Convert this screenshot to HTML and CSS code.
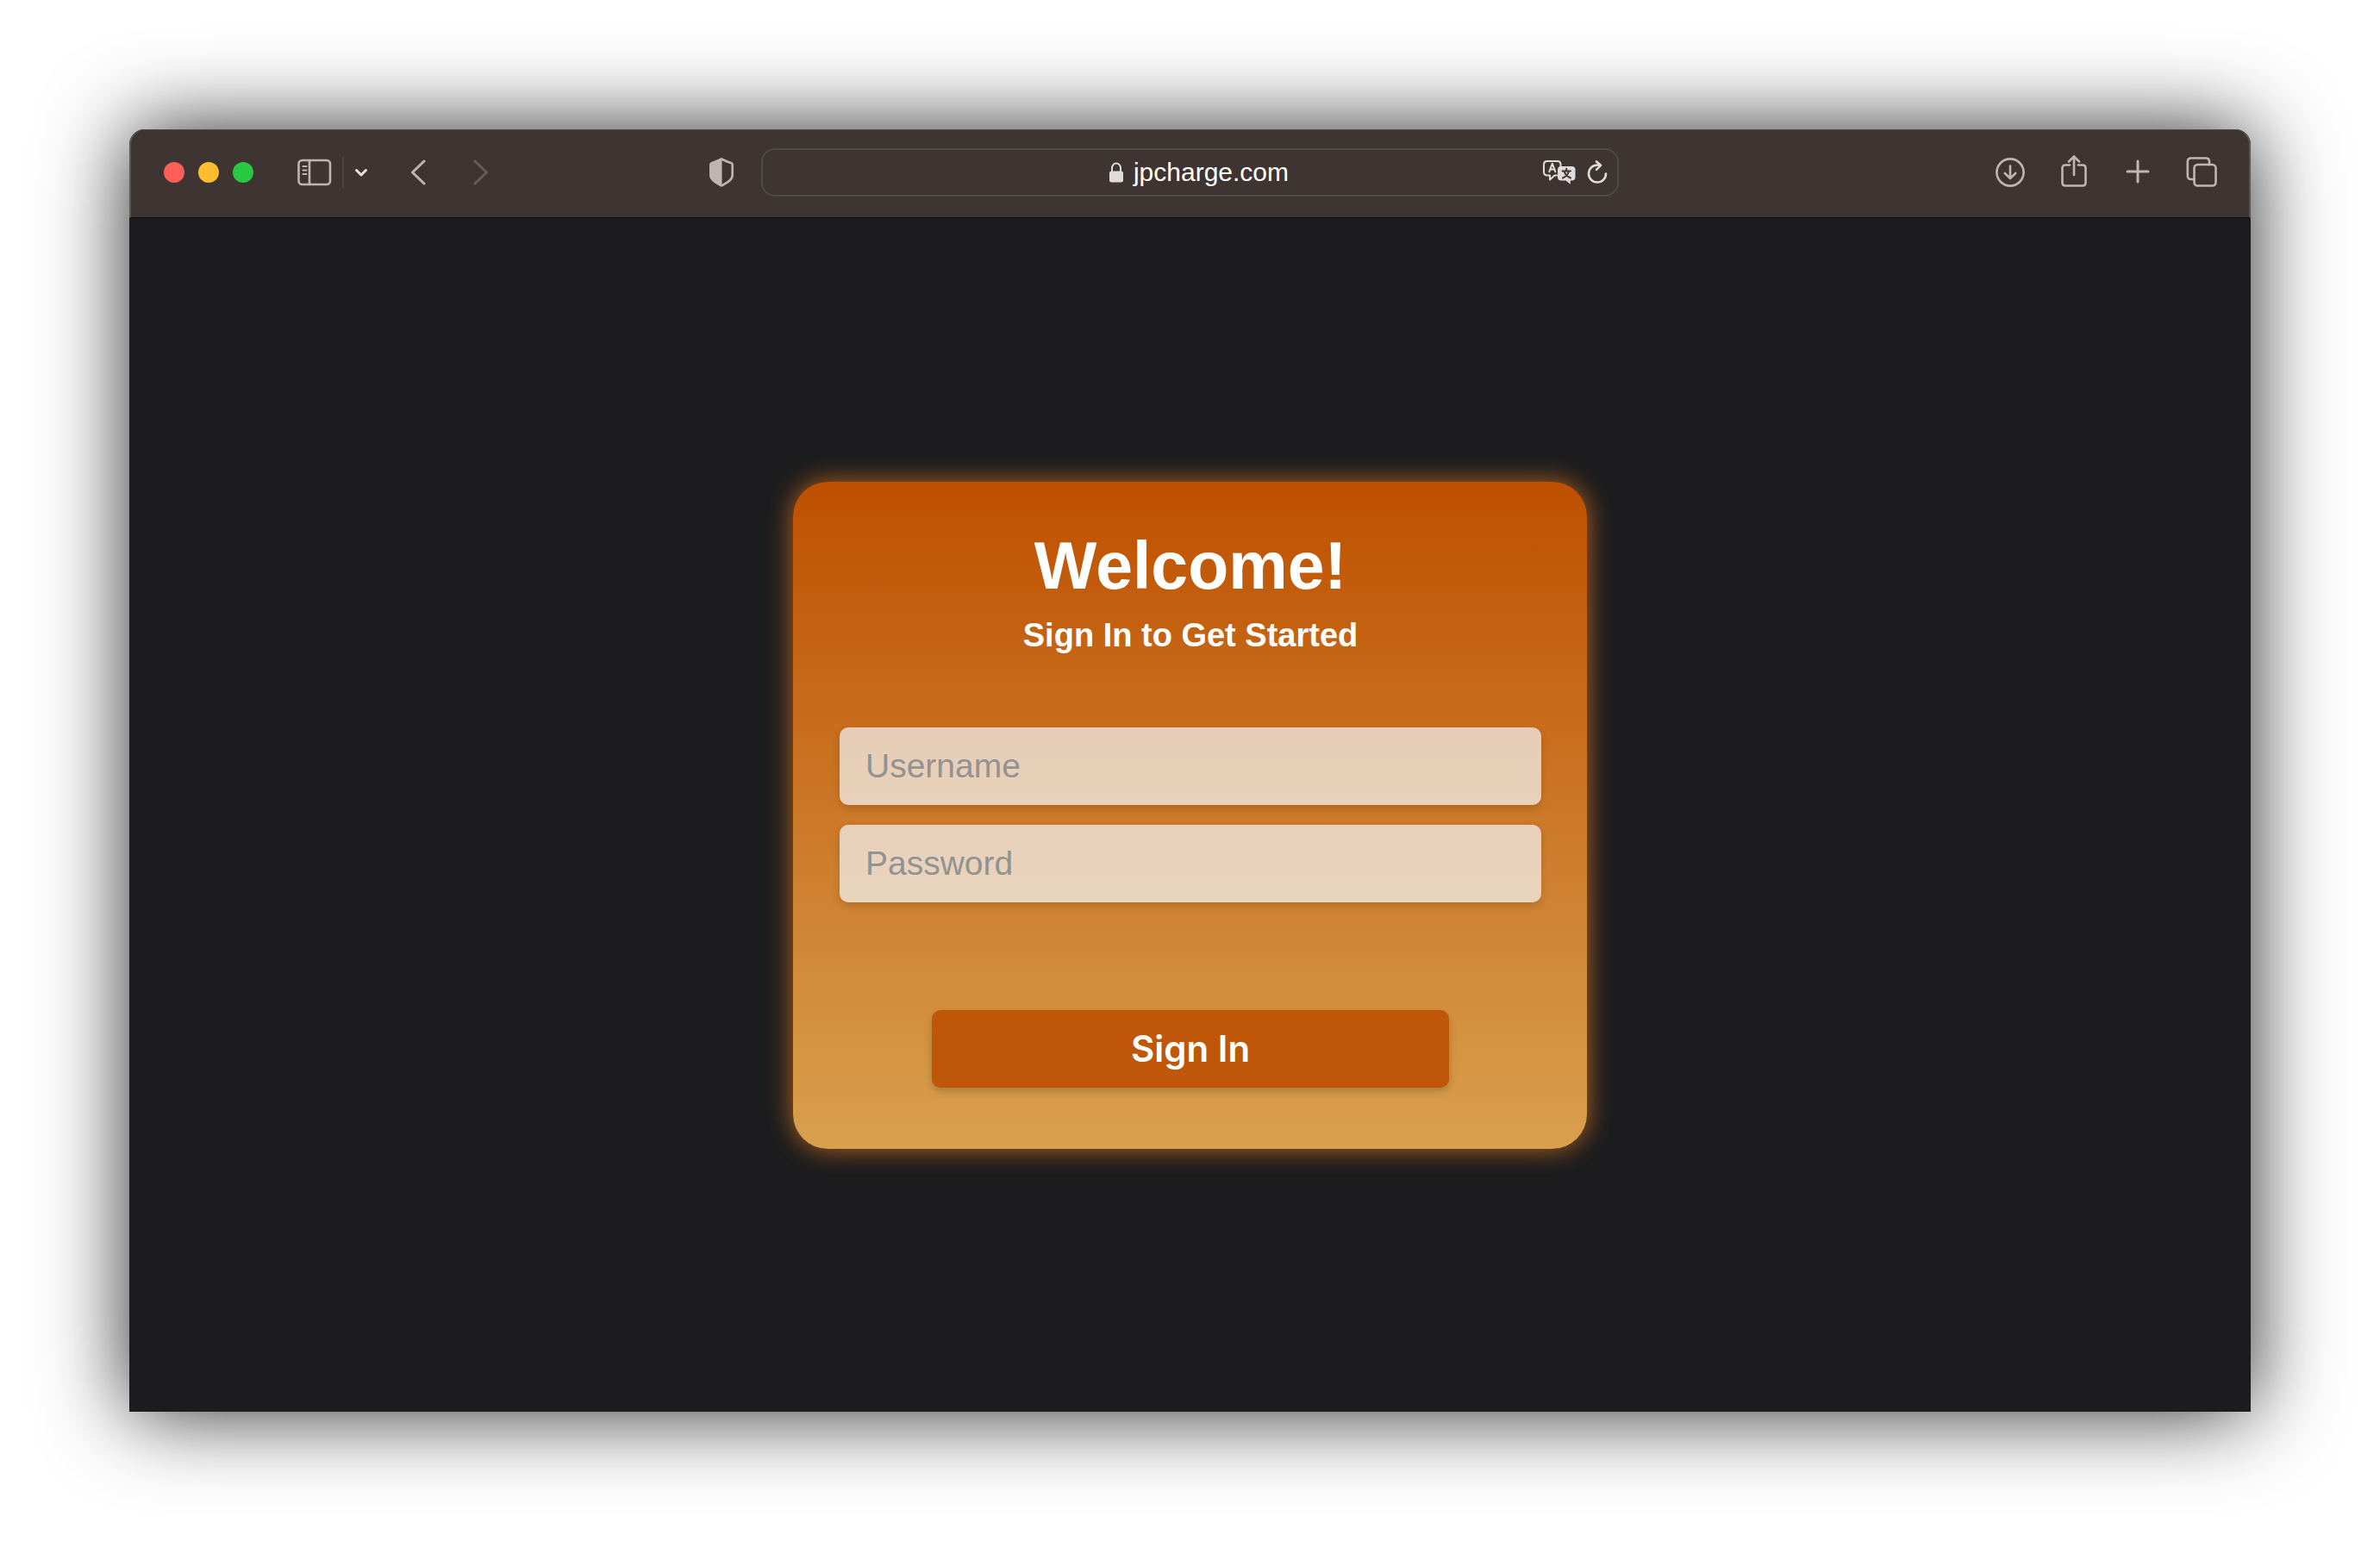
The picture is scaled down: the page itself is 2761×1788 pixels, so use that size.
FILE: index.html
```html
<!DOCTYPE html>
<html lang="en">
<head>
<meta charset="utf-8">
<title>Sign In</title>
<link rel="stylesheet" href="styles.css">
</head>
<body>
<div class="window">
  <header class="toolbar">
    <div class="group group-left">
      <div class="lights">
        <button class="light red" aria-label="Close"></button>
        <button class="light yellow" aria-label="Minimize"></button>
        <button class="light green" aria-label="Zoom"></button>
      </div>
      <div class="sidebar-tools">
        <button class="icon" aria-label="Show sidebar">
          <svg width="40" height="32" viewBox="0 0 40 32"><rect x="1.5" y="2" width="36.5" height="28" rx="4"/><path d="M14 2v28"/><path class="thin" d="M6.500 9h4M6.500 13.500h4M6.500 18h4"/></svg>
        </button>
        <span class="divider"></span>
        <button class="icon bright" aria-label="Tab groups">
          <svg class="bold" width="16" height="12" viewBox="0 0 16 12"><path d="M2.500 3.500 8 9 13.500 3.500"/></svg>
        </button>
      </div>
      <div class="history">
        <button class="icon" aria-label="Back">
          <svg class="bold" width="20" height="30" viewBox="0 0 20 30"><path d="M16 2 2.500 15 16 28"/></svg>
        </button>
        <button class="icon dim" aria-label="Forward">
          <svg class="bold" width="20" height="30" viewBox="0 0 20 30"><path d="M3 2 16.500 15 3 28"/></svg>
        </button>
      </div>
      <button class="icon shield" aria-label="Privacy report">
        <svg width="28" height="34" viewBox="0 0 28 34"><path d="M14 1.500C17 3 21.500 5 25.500 6.200Q26.700 6.700 26.700 8.200V20C26.700 26 20 29 14 32.500 8 29 1.300 26 1.300 20V8.200Q1.300 6.700 2.500 6.200C6.500 5 11 3 14 1.500Z"/><path class="solid" d="M14.500 1.500V32.500C8 29 1.300 26 1.300 20V8.200Q1.300 6.700 2.500 6.200C6.500 5 11 3 14.500 1.500Z"/></svg>
      </button>
    </div>
    <div class="address">
      <span class="site">
        <svg class="lock" width="18" height="24" viewBox="0 0 18 24"><path class="thin" d="M4 12V7a5 5.500 0 0 1 10 0v5"/><rect class="solid" x="1" y="10.500" width="16" height="13" rx="2.500"/></svg>
        <span>jpcharge.com</span>
      </span>
      <span class="address-tools">
        <button class="icon pale" aria-label="Translate">
          <svg class="thin" width="40" height="30" viewBox="0 0 40 30"><path d="M17 18.500H14.500L9 23.500V18.500H6Q2 18.500 2 14.500V6Q2 2 6 2H17.500Q21.500 2 21.500 6V9"/><path d="M8.300 14.200 11.800 4.800 15.300 14.200M9.500 11.400h4.600"/><path class="solid" d="M22 8H34.500Q38.500 8 38.500 12V20.500Q38.500 24.500 34.500 24.500H32.800V28.800L27.500 24.500H22Q18 24.500 18 20.500V12Q18 8 22 8Z"/><path class="cut" d="M28.200 10.800v2.400M23.500 13.500h9.500M31 13.800Q29.500 19 24 21.500M25.500 13.800Q27.500 19 33 21.500"/></svg>
        </button>
        <button class="icon pale" aria-label="Reload">
          <svg width="24" height="28" viewBox="0 0 24 28"><path d="M22 15.500A10 10 0 1 1 12 5.500H15.500M11 1.400 16 5.800 11 10.800"/></svg>
        </button>
      </span>
    </div>
    <div class="group group-right">
      <button class="icon" aria-label="Downloads">
        <svg width="36" height="40" viewBox="0 0 36 40"><circle cx="18" cy="20" r="15.600"/><path d="M18 12.500V27M11.800 21 18 27.200 24.200 21"/></svg>
      </button>
      <button class="icon" aria-label="Share">
        <svg width="36" height="40" viewBox="0 0 36 40"><path d="M13 11.500H8Q4.500 11.500 4.500 15V32Q4.500 35.500 8 35.500H28Q31.500 35.500 31.500 32V15Q31.500 11.500 28 11.500H23M18 23V2M12 7.500 18 1.500 24 7.500"/></svg>
      </button>
      <button class="icon" aria-label="New tab">
        <svg class="bold" width="36" height="40" viewBox="0 0 36 40"><path d="M18 7V31M6 19H30"/></svg>
      </button>
      <button class="icon" aria-label="Tab overview">
        <svg width="36" height="40" viewBox="0 0 36 40"><rect x="9.500" y="11" width="25" height="24.500" rx="4"/><path d="M9.500 28H6Q1.800 28 1.800 24V7.500Q1.800 3.500 6 3.500H23Q27 3.500 27 7.500V11"/></svg>
      </button>
    </div>
  </header>
  <main class="page">
    <form class="card">
      <h1 class="title">Welcome!</h1>
      <p class="subtitle">Sign In to Get Started</p>
      <div class="fields">
        <input class="field" type="text" placeholder="Username" aria-label="Username">
        <input class="field" type="password" placeholder="Password" aria-label="Password">
      </div>
      <button class="submit" type="submit">Sign In</button>
    </form>
  </main>
</div>
</body>
</html>
```
FILE: styles.css
```css
* {
  box-sizing: border-box;
}

body {
  margin: 0;
  min-height: 100vh;
  display: flex;
  padding: 150px;
  background: #fff;
  font-family: "Liberation Sans", Arial, sans-serif;
}

button {
  padding: 0;
  border: 0;
  background: none;
  font: inherit;
}

svg {
  display: block;
  fill: none;
  stroke: currentColor;
  stroke-width: 2.6;
  stroke-linecap: round;
  stroke-linejoin: round;
}

.bold { stroke-width: 3; }
.thin { stroke-width: 2; }

.solid {
  fill: currentColor;
  stroke: none;
}

.cut {
  stroke: #3e3532;
  stroke-width: 2;
}

.window {
  flex: 1;
  display: flex;
  flex-direction: column;
  border-radius: 18px 18px 0 0;
  background: #1c1c1e;
  box-shadow: 0 0 100px rgba(0, 0, 0, 0.85);
}

/* Browser toolbar */
.toolbar {
  display: grid;
  grid-template-columns: 1fr 995px 1fr;
  align-items: center;
  height: 103px;
  padding-bottom: 4px;
  border: 2px solid #5c5550;
  border-top: 1px solid #514d48;
  border-bottom: 1px solid #0f0e0f;
  border-radius: 18px 18px 0 0;
  background: #3e3532;
}

.group {
  display: flex;
  align-items: center;
}

.group-left {
  padding: 0 32px 0 38px;
}

.lights {
  display: flex;
  gap: 16px;
}

.light {
  width: 24px;
  height: 24px;
  border-radius: 50%;
}

.red { background: #ff5f57; }
.yellow { background: #febc2e; }
.green { background: #28c840; }

.icon {
  display: block;
  color: #c0b5b2;
}

.bright { color: #eae0dd; }
.dim { color: #665c59; }
.pale { color: #dfdcdb; }

.sidebar-tools {
  display: flex;
  align-items: center;
  gap: 12px;
  margin-left: 51px;
}

.divider {
  width: 2px;
  height: 36px;
  background: #4f4643;
}

.history {
  display: flex;
  gap: 52px;
  margin-left: 49px;
}

.shield {
  margin-left: auto;
}

.address {
  display: grid;
  grid-template-columns: 1fr auto 1fr;
  align-items: center;
  height: 56px;
  padding: 0 11px;
  border: 2px solid #504a46;
  border-radius: 16px;
  color: #fff;
  font-size: 30px;
  line-height: 36px;
}

.site {
  grid-column: 2;
  display: flex;
  align-items: center;
  gap: 11px;
  padding-left: 20px;
}

.lock {
  color: #dfdcdb;
}

.address-tools {
  display: flex;
  align-items: center;
  justify-content: flex-end;
  gap: 12px;
}

.group-right {
  justify-content: flex-end;
  gap: 38px;
  padding-right: 37px;
}

/* Sign-in page */
.page {
  flex: 1;
  display: flex;
  align-items: center;
  justify-content: center;
}

.card {
  display: flex;
  flex-direction: column;
  align-items: center;
  width: 921px;
  padding: 57px 53px 71px 54px;
  border-radius: 40px;
  background: linear-gradient(#be5000, #d9a04e);
  box-shadow: 0 0 30px #b66620;
}

.title {
  margin: 0;
  color: #fff;
  font-size: 77px;
  line-height: 80px;
}

.subtitle {
  margin: 16px 0 0;
  color: #fff;
  font-size: 38px;
  font-weight: 700;
  line-height: 50px;
}

.fields {
  display: flex;
  flex-direction: column;
  gap: 23px;
  align-self: stretch;
  margin: 82px 0 125px;
}

.field {
  width: 100%;
  height: 90px;
  padding: 0 30px;
  border: 0;
  border-radius: 10px;
  background: rgba(243, 243, 243, 0.72);
  box-shadow: 0 4px 10px rgba(0, 0, 0, 0.15);
  color: #333;
  font: 39px "Liberation Sans", Arial, sans-serif;
}

.field::placeholder {
  color: #929292;
}

.submit {
  width: 600px;
  height: 90px;
  border-radius: 10px;
  background: #c05608;
  box-shadow: 0 4px 10px rgba(0, 0, 0, 0.2);
  color: #fff;
  font-family: Inter, "Liberation Sans", sans-serif;
  font-size: 42px;
  font-weight: 600;
}
```
